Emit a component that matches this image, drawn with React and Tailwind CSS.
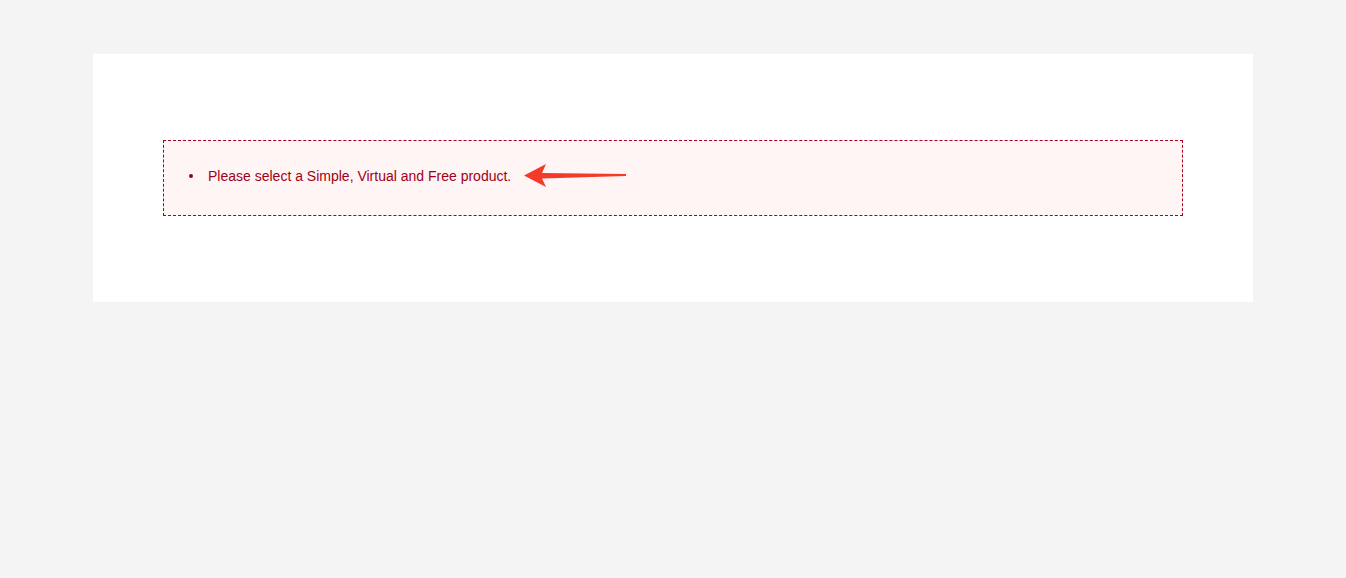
export default function App() {
  return (
    <div className="min-h-[578px] bg-[#f4f4f4] pt-[54px] px-[93px] font-['Liberation_Sans',Arial,sans-serif]">
      <div className="bg-white h-[248px] px-[70px] pt-[86px]">
        {/* Notice box */}
        <div className="border border-dashed border-[#a8001e] bg-[#fff5f5] pt-[25px] pb-[29px] pl-[25px]">
          <ul className="flex items-center h-[20px]">
            <li className="flex items-center text-[14px] leading-[20px] text-[#a00017]">
              <span className="w-[4px] h-[4px] rounded-full bg-[#a00017] mr-[15px]" />
              Please select a Simple, Virtual and Free product.
            </li>
            <li className="ml-[12px] flex items-center h-[20px]">
              <svg width="104" height="26" viewBox="0 0 104 26" className="block -my-[3px]">
                <path
                  d="M1 12.5 L23 1 L19 10 L103 11 L103 13 L19 15.5 L23 24 Z"
                  fill="#f43a2a"
                />
              </svg>
            </li>
          </ul>
        </div>
      </div>
    </div>
  );
}
